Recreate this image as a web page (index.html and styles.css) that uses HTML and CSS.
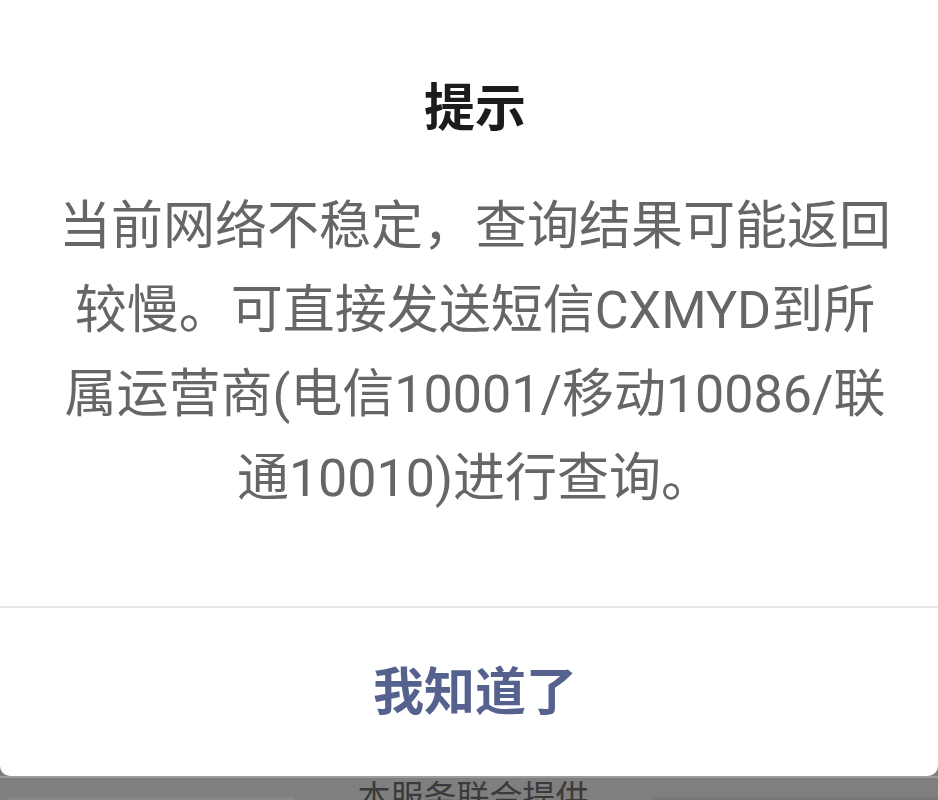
FILE: index.html
```html
<!DOCTYPE html>
<html lang="zh-CN">
<head>
<meta charset="utf-8">
<title>提示</title>
<link rel="stylesheet" href="styles.css">
</head>
<body>
<div class="screen">
  <div class="dialog">
    <h1 class="dialog-title">提示</h1>
    <p class="dialog-body">当前网络不稳定，查询结果可能返回<br>较慢。可直接发送短信CXMYD到所<br>属运营商(电信10001/移动10086/联<br>通10010)进行查询。</p>
    <div class="dialog-actions">
      <button class="dialog-btn" type="button">我知道了</button>
    </div>
  </div>
  <div class="page-footer">
    <span class="footer-line footer-line-left"></span>
    <span class="footer-text">本服务联合提供</span>
    <span class="footer-line footer-line-right"></span>
  </div>
</div>
</body>
</html>
```
FILE: styles.css
```css
* { box-sizing: border-box; }
html, body {
  margin: 0;
  padding: 0;
  width: 938px;
  height: 800px;
  overflow: hidden;
  background: #7f7f7f;
  font-family: "Roboto", "Noto Sans CJK SC", sans-serif;
}
.screen {
  display: flex;
  flex-direction: column;
  height: 800px;
}
.dialog {
  background: #ffffff;
  height: 776px;
  padding-left: 12px;
  border-radius: 0 0 10px 10px;
  display: flex;
  flex-direction: column;
  flex-shrink: 0;
}
.dialog-title {
  margin: 0;
  padding-top: 79px;
  font-size: 51px;
  line-height: 60px;
  font-weight: 700;
  color: #1c1c1c;
  text-align: center;
}
.dialog-body {
  margin: 46px 0 0;
  padding: 0 20px;
  font-size: 52px;
  line-height: 84px;
  color: #666666;
  text-align: center;
  white-space: nowrap;
}
.dialog-actions {
  margin-top: auto;
  margin-left: -12px;
  padding-left: 12px;
  border-top: 2px solid #e6e6e6;
  height: 170px;
  display: flex;
  align-items: center;
  justify-content: center;
}
.dialog-btn {
  background: none;
  border: 0;
  padding: 0;
  font-family: inherit;
  font-size: 51px;
  line-height: 60px;
  font-weight: 700;
  color: #56628e;
  margin-top: 2px;
}
.page-footer {
  flex: 1;
  border-top: 2px solid #9c9c9c;
  display: flex;
  align-items: flex-start;
  gap: 64px;
  overflow: hidden;
}
.footer-text {
  font-size: 33px;
  line-height: 40px;
  color: #3a3a3a;
  white-space: nowrap;
}
.footer-line {
  height: 4px;
  margin-top: 19px;
  flex: 1;
}
.footer-line-left {
  background: #878787;
  margin-left: 8px;
}
.footer-line-right {
  background: #777777;
}
```
